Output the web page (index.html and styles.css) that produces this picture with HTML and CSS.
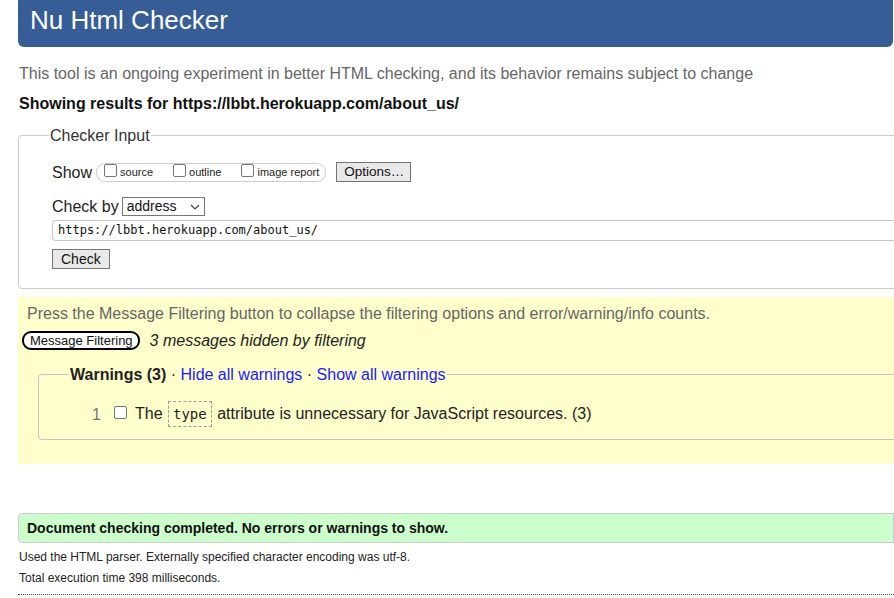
FILE: index.html
```html
<!DOCTYPE html>
<html lang="en">
<head>
<meta charset="utf-8">
<title>Showing results for https://lbbt.herokuapp.com/about_us/ - Nu Html Checker</title>
<link rel="stylesheet" href="styles.css">
</head>
<body>
<div class="page">
  <h1 class="hd">Nu Html Checker</h1>
  <p class="intro">This tool is an ongoing experiment in better HTML checking, and its behavior remains subject to change</p>
  <p class="showing">Showing results for https://lbbt.herokuapp.com/about_us/</p>

  <fieldset class="input">
    <legend class="input-legend">Checker Input</legend>
    <div class="row show-row">
      <span class="lbl">Show</span>
      <span class="opts">
        <span class="opt"><span class="cb"></span>source</span>
        <span class="opt"><span class="cb"></span>outline</span>
        <span class="opt"><span class="cb"></span>image report</span>
      </span>
      <span class="btn opt-btn">Options…</span>
    </div>
    <div class="row by-row">
      <span class="lbl">Check by</span>
      <span class="select">address
        <svg class="chev" width="10" height="6" viewBox="0 0 10 6"><path d="M1 1 L5 5 L9 1" fill="none" stroke="#444" stroke-width="1.2"/></svg>
      </span>
    </div>
    <div class="url">https://lbbt.herokuapp.com/about_us/</div>
    <span class="btn check-btn">Check</span>
  </fieldset>

  <section class="filters">
    <p class="press">Press the Message Filtering button to collapse the filtering options and error/warning/info counts.</p>
    <div class="filter-row">
      <span class="mf-btn">Message Filtering</span>
      <em class="hidden-note">3 messages hidden by filtering</em>
    </div>
    <fieldset class="warnings">
      <legend class="warn-legend"><strong>Warnings (3)</strong> · <a class="lnk">Hide all warnings</a> · <a class="lnk">Show all warnings</a></legend>
      <div class="msg">
        <span class="num">1</span>
        <span class="cb"></span>
        <span class="msg-text">The <code class="code">type</code> attribute is unnecessary for JavaScript resources. (3)</span>
      </div>
    </fieldset>
  </section>

  <p class="success">Document checking completed. No errors or warnings to show.</p>
  <p class="details first">Used the HTML parser. Externally specified character encoding was utf-8.</p>
  <p class="details">Total execution time 398 milliseconds.</p>
  <div class="rule"></div>
</div>
</body>
</html>
```

FILE: styles.css
```css
html, body {
  margin: 0;
  padding: 0;
  background: #fff;
  overflow: hidden;
}
body {
  font-family: "Liberation Sans", Arial, sans-serif;
  color: #222;
  font-size: 16px;
}
.page {
  padding-left: 18px;
  width: 940px;
}
.hd {
  margin: 0;
  width: 863px;
  height: 47px;
  background: #365d95;
  color: #fff;
  font-weight: normal;
  font-size: 26px;
  line-height: 40px;
  padding-left: 12px;
  border-radius: 0 0 6px 6px;
  box-sizing: content-box;
}
.intro {
  margin: 17px 0 0 1px;
  color: #666;
  line-height: 19px;
}
.showing {
  margin: 11px 0 0 1px;
  font-weight: bold;
  color: #111;
  line-height: 19px;
}
.input {
  margin: 13px 0 0 0;
  border: 1px solid #ccc;
  border-radius: 4px;
  padding: 17px 0 19px 33px;
  width: 900px;
}
.input-legend {
  padding: 0 1px;
  margin-left: -3px;
  line-height: 19px;
  color: #333;
}
.row {
  display: flex;
  align-items: center;
}
.lbl {
  line-height: 19px;
  color: #222;
}
.show-row {
  height: 20px;
}
.opts {
  display: flex;
  align-items: center;
  white-space: nowrap;
  margin-left: 4px;
  height: 17px;
  border: 1px solid #ccc;
  border-radius: 9px;
  padding: 0 6px 0 7px;
}
.opt {
  display: flex;
  align-items: center;
  font-size: 11px;
  color: #222;
  margin-right: 20px;
}
.opt:last-child { margin-right: 0; }
.cb {
  display: inline-block;
  width: 11px;
  height: 11px;
  border: 1px solid #767676;
  border-radius: 2px;
  background: #fff;
  margin-right: 3px;
  margin-top: -3px;
}
.btn {
  display: inline-block;
  background: #e9e9e9;
  border: 1px solid #767676;
  font-size: 14px;
  line-height: 18px;
  color: #111;
  padding: 0 6px;
}
.opt-btn {
  margin-left: 10px;
  padding: 0 6px 0 7px;
  font-size: 13.5px;
}
.by-row {
  margin-top: 14px;
  height: 20px;
}
.select {
  display: flex;
  align-items: center;
  justify-content: space-between;
  margin-left: 3px;
  width: 73px;
  height: 17px;
  border: 1px solid #767676;
  font-size: 14px;
  padding: 0 4px 0 4px;
  color: #111;
  box-sizing: content-box;
}
.chev { margin-top: 1px; }
.url {
  margin-top: 4px;
  height: 19px;
  border: 1px solid #c8c8c8;
  border-radius: 4px 0 0 4px;
  border-right: none;
  font-family: "DejaVu Sans Mono", "Liberation Mono", monospace;
  font-size: 12px;
  line-height: 19px;
  padding-left: 5px;
  color: #111;
}
.check-btn {
  margin-top: 8px;
  padding: 0 8px 0 8px;
  line-height: 18px;
}
.filters {
  margin-top: 8px;
  background: #ffffcc;
  padding: 7px 0 24px 0;
  width: 900px;
}
.press {
  margin: 0 0 0 9px;
  color: #666;
  line-height: 19px;
}
.filter-row {
  display: flex;
  align-items: center;
  margin-top: 8px;
  margin-left: 4px;
}
.mf-btn {
  border: 2px solid #000;
  border-radius: 9px;
  font-size: 13px;
  line-height: 15px;
  padding: 0 5px 0 6px;
  background: #fff;
  color: #111;
}
.hidden-note {
  margin-left: 10px;
  color: #222;
  line-height: 19px;
}
.warnings {
  margin: 15px 0 0 20px;
  border: 1px solid #c3c3d0;
  border-radius: 4px;
  padding: 17px 0 12px 0;
}
.warn-legend {
  margin-left: 30px;
  padding: 0 1px;
  line-height: 19px;
  color: #222;
}
.lnk {
  color: #1a1aff;
}
.msg {
  display: flex;
  align-items: center;
  line-height: 19px;
  padding-left: 53px;
}
.num {
  color: #777;
  width: 22px;
}
.msg .cb {
  width: 11px;
  height: 11px;
  margin: -4px 8px 0 0;
}
.code {
  display: inline-block;
  font-family: "DejaVu Sans Mono", "Liberation Mono", monospace;
  font-size: 14px;
  border: 1px dashed #999;
  padding: 3px 4px 3px 4px;
  line-height: 18px;
  margin: 0 1px;
}
.success {
  margin: 49px 0 0 0;
  width: 866px;
  background: #ccffcc;
  border: 1px solid #ccc;
  border-radius: 4px 0 0 4px;
  padding: 6px 0 5px 8px;
  font-size: 14px;
  font-weight: bold;
  color: #111;
  line-height: 17px;
}
.details {
  margin: 0 0 0 1px;
  font-size: 12px;
  line-height: 21px;
  color: #222;
}
.details.first { margin-top: 4px; }
.rule {
  margin-top: 5px;
  border-bottom: 1px dotted #555;
  width: 900px;
}
```
